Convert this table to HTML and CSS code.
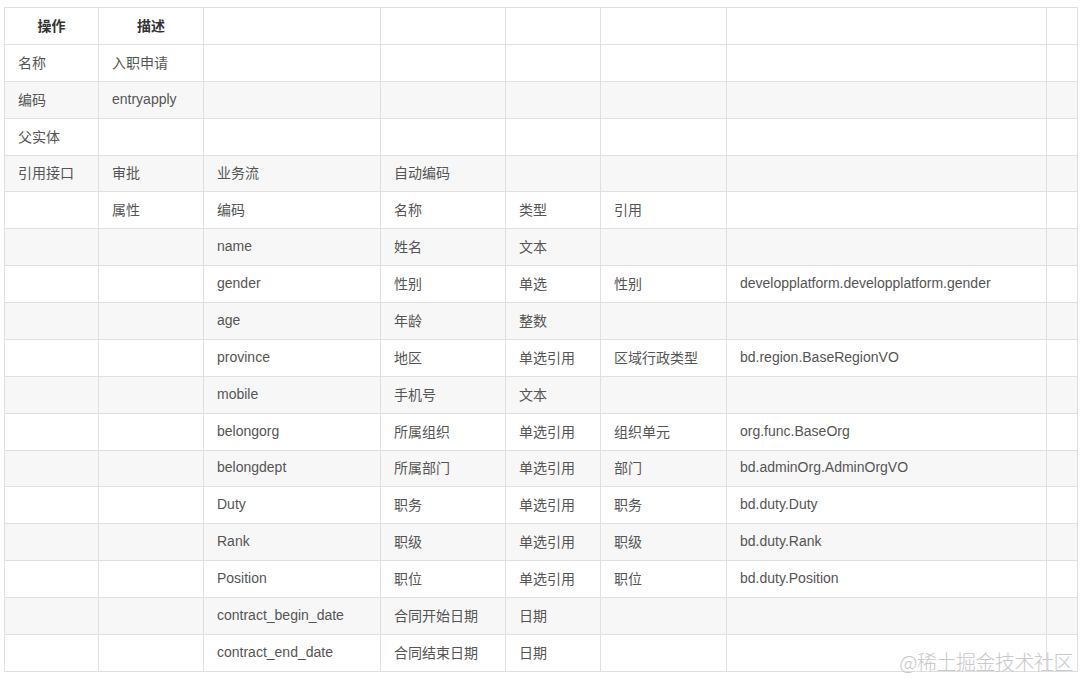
FILE: index.html
```html
<!DOCTYPE html>
<html lang="zh-CN">
<head>
<meta charset="utf-8">
<title>entryapply</title>
<link rel="stylesheet" href="styles.css">
</head>
<body>
<div class="page">
<table class="meta">
  <colgroup>
    <col class="c1"><col class="c2"><col class="c3"><col class="c4"><col class="c5"><col class="c6"><col class="c7"><col class="c8">
  </colgroup>
  <thead>
    <tr><th>操作</th><th>描述</th><th></th><th></th><th></th><th></th><th></th><th></th></tr>
  </thead>
  <tbody>
    <tr><td>名称</td><td>入职申请</td><td></td><td></td><td></td><td></td><td></td><td></td></tr>
    <tr><td>编码</td><td>entryapply</td><td></td><td></td><td></td><td></td><td></td><td></td></tr>
    <tr><td>父实体</td><td></td><td></td><td></td><td></td><td></td><td></td><td></td></tr>
    <tr><td>引用接口</td><td>审批</td><td>业务流</td><td>自动编码</td><td></td><td></td><td></td><td></td></tr>
    <tr><td></td><td>属性</td><td>编码</td><td>名称</td><td>类型</td><td>引用</td><td></td><td></td></tr>
    <tr><td></td><td></td><td>name</td><td>姓名</td><td>文本</td><td></td><td></td><td></td></tr>
    <tr><td></td><td></td><td>gender</td><td>性别</td><td>单选</td><td>性别</td><td>developplatform.developplatform.gender</td><td></td></tr>
    <tr><td></td><td></td><td>age</td><td>年龄</td><td>整数</td><td></td><td></td><td></td></tr>
    <tr><td></td><td></td><td>province</td><td>地区</td><td>单选引用</td><td>区域行政类型</td><td>bd.region.BaseRegionVO</td><td></td></tr>
    <tr><td></td><td></td><td>mobile</td><td>手机号</td><td>文本</td><td></td><td></td><td></td></tr>
    <tr><td></td><td></td><td>belongorg</td><td>所属组织</td><td>单选引用</td><td>组织单元</td><td>org.func.BaseOrg</td><td></td></tr>
    <tr><td></td><td></td><td>belongdept</td><td>所属部门</td><td>单选引用</td><td>部门</td><td>bd.adminOrg.AdminOrgVO</td><td></td></tr>
    <tr><td></td><td></td><td>Duty</td><td>职务</td><td>单选引用</td><td>职务</td><td>bd.duty.Duty</td><td></td></tr>
    <tr><td></td><td></td><td>Rank</td><td>职级</td><td>单选引用</td><td>职级</td><td>bd.duty.Rank</td><td></td></tr>
    <tr><td></td><td></td><td>Position</td><td>职位</td><td>单选引用</td><td>职位</td><td>bd.duty.Position</td><td></td></tr>
    <tr><td></td><td></td><td>contract_begin_date</td><td>合同开始日期</td><td>日期</td><td></td><td></td><td></td></tr>
    <tr><td></td><td></td><td>contract_end_date</td><td>合同结束日期</td><td>日期</td><td></td><td></td><td></td></tr>
  </tbody>
</table>
<div class="watermark">@稀土掘金技术社区</div>
</div>
</body>
</html>
```

FILE: styles.css
```css
html, body {
  margin: 0;
  padding: 0;
  background: #ffffff;
}

.page {
  position: relative;
  width: 1080px;
  height: 679px;
  padding: 7px 0 0 4px;
  box-sizing: border-box;
  overflow: hidden;
}

.meta {
  border-collapse: collapse;
  table-layout: fixed;
  width: 1073px;
  font-family: "Liberation Sans", Arial, "Noto Sans CJK SC", sans-serif;
  font-size: 14px;
  color: #555555;
}

.c1 { width: 94px; }
.c2 { width: 105px; }
.c3 { width: 177px; }
.c4 { width: 125px; }
.c5 { width: 95px; }
.c6 { width: 126px; }
.c7 { width: 320px; }
.c8 { width: 31px; }

.meta th,
.meta td {
  border: 1px solid #e0e0e0;
  height: 36.875px;
  box-sizing: border-box;
  padding: 0 0 2px 13px;
  text-align: left;
  white-space: nowrap;
  overflow: hidden;
  font-weight: normal;
}

.meta th {
  font-weight: bold;
  color: #333333;
  text-align: center;
  padding: 0 0 2px 0;
}

.meta tbody tr:nth-child(even) td {
  background: #f7f7f7;
}

.watermark {
  position: absolute;
  right: 7px;
  bottom: 5px;
  font-family: "Noto Sans CJK SC", sans-serif;
  font-weight: 300;
  font-size: 20px;
  color: #c9c9c9;
  line-height: 24px;
  letter-spacing: -0.5px;
}
```
